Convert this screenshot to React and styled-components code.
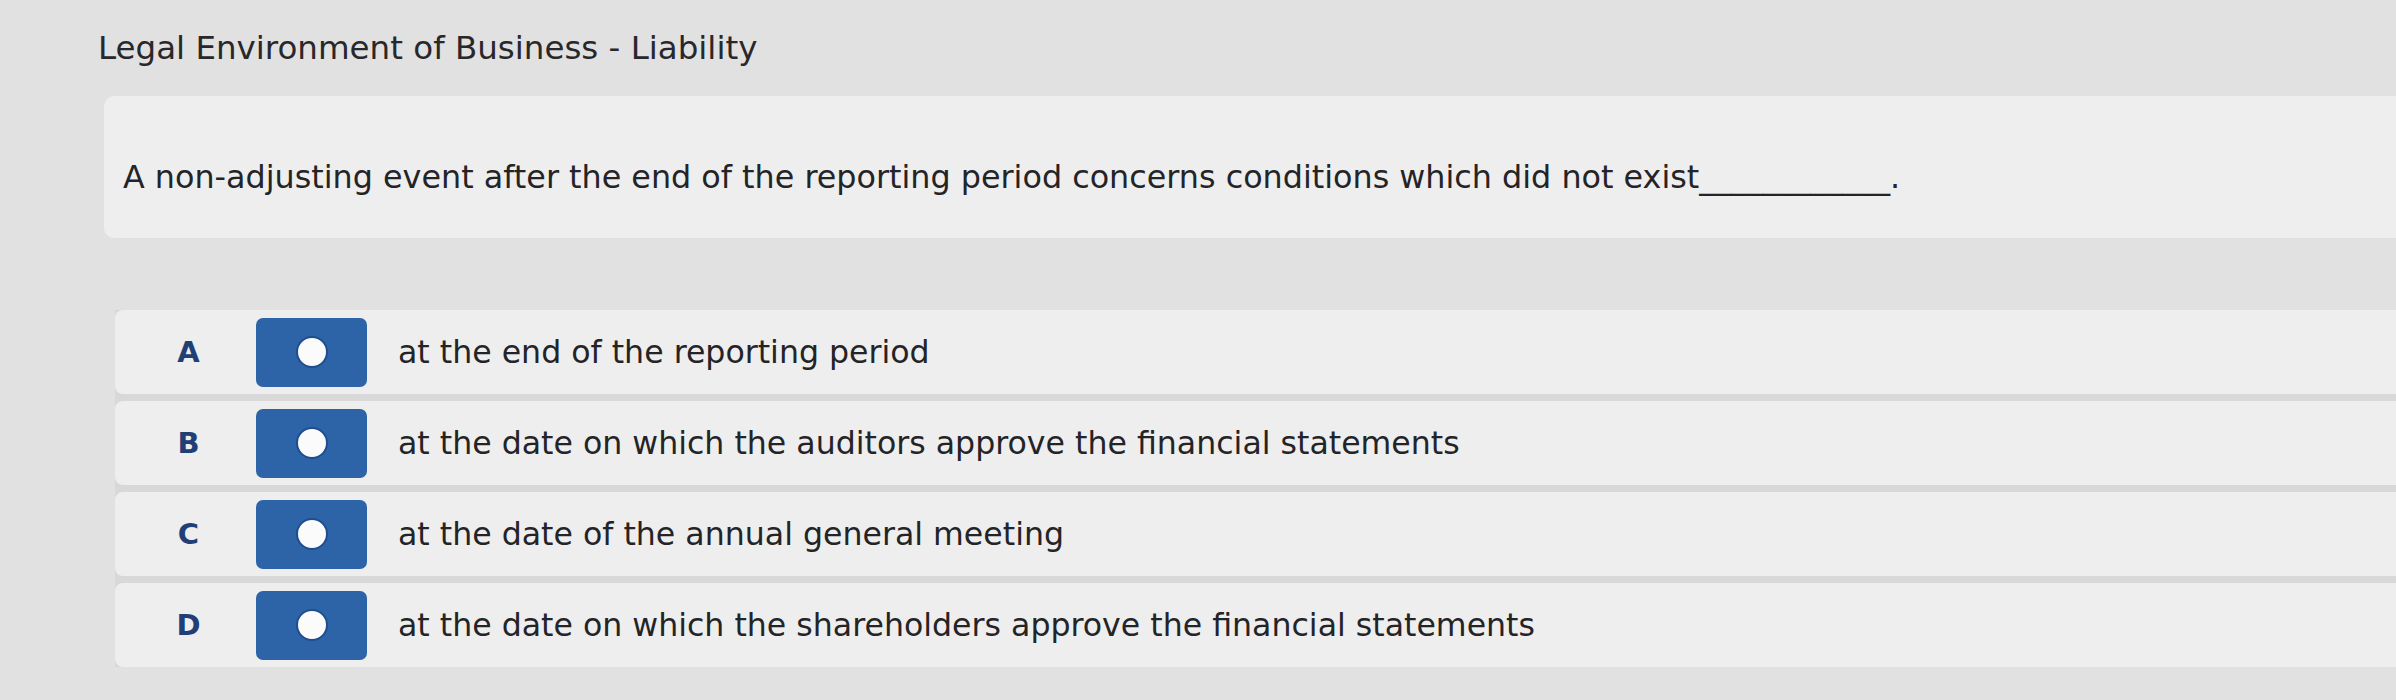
import styled, { createGlobalStyle } from 'styled-components';

const GlobalStyle = createGlobalStyle`
  html, body {
    margin: 0;
    padding: 0;
    background: #e1e1e2;
  }
  body {
    font-family: "DejaVu Sans", Verdana, sans-serif;
    color: #242427;
  }
`;

const Page = styled.div`
  width: 2396px;
  height: 700px;
  overflow: hidden;
  display: flex;
  flex-direction: column;
`;

const Header = styled.header`
  height: 96px;
  display: flex;
  align-items: center;
  padding-left: 98px;
  box-sizing: border-box;
`;

const Title = styled.h1`
  margin: 0;
  font-size: 32.5px;
  font-weight: normal;
  color: #28282b;
`;

const QuestionCard = styled.section`
  margin-left: 104px;
  height: 142px;
  box-sizing: border-box;
  padding: 18px 0 0 19px;
  background: #eeeeef;
  border-radius: 10px 0 0 10px;
  display: flex;
  align-items: center;
`;

const QuestionText = styled.p`
  margin: 0;
  font-size: 31.8px;
  color: #242427;
`;

const Options = styled.div`
  margin-top: 72px;
  margin-left: 115px;
  display: flex;
  flex-direction: column;
  gap: 7px;
  background: #d8d8d9;
`;

const Row = styled.div`
  height: 84px;
  display: flex;
  align-items: center;
  background: #eeeeee;
  border-radius: 8px 0 0 8px;
`;

const Letter = styled.span`
  width: 141px;
  padding-left: 6px;
  box-sizing: border-box;
  text-align: center;
  font-size: 29px;
  font-weight: bold;
  color: #213f76;
`;

const RadioBox = styled.span`
  width: 111px;
  height: 69px;
  border-radius: 7px;
  background: #2d63a7;
  display: flex;
  align-items: center;
  justify-content: center;
  flex-shrink: 0;
`;

const Dot = styled.span`
  width: 28px;
  height: 28px;
  border-radius: 50%;
  background: #fbfbfb;
  border: 2px solid #1e4e8d;
`;

const Answer = styled.span`
  margin-left: 31px;
  font-size: 31.6px;
  color: #242427;
`;

const options = [
  ['A', 'at the end of the reporting period'],
  ['B', 'at the date on which the auditors approve the financial statements'],
  ['C', 'at the date of the annual general meeting'],
  ['D', 'at the date on which the shareholders approve the financial statements'],
];

export default function App() {
  return (
    <Page>
      <GlobalStyle />
      <Header>
        <Title>Legal Environment of Business - Liability</Title>
      </Header>
      <QuestionCard>
        <QuestionText>
          A non-adjusting event after the end of the reporting period concerns conditions which did not exist____________.
        </QuestionText>
      </QuestionCard>
      <Options>
        {options.map(([letter, text]) => (
          <Row key={letter}>
            <Letter>{letter}</Letter>
            <RadioBox>
              <Dot />
            </RadioBox>
            <Answer>{text}</Answer>
          </Row>
        ))}
      </Options>
    </Page>
  );
}
